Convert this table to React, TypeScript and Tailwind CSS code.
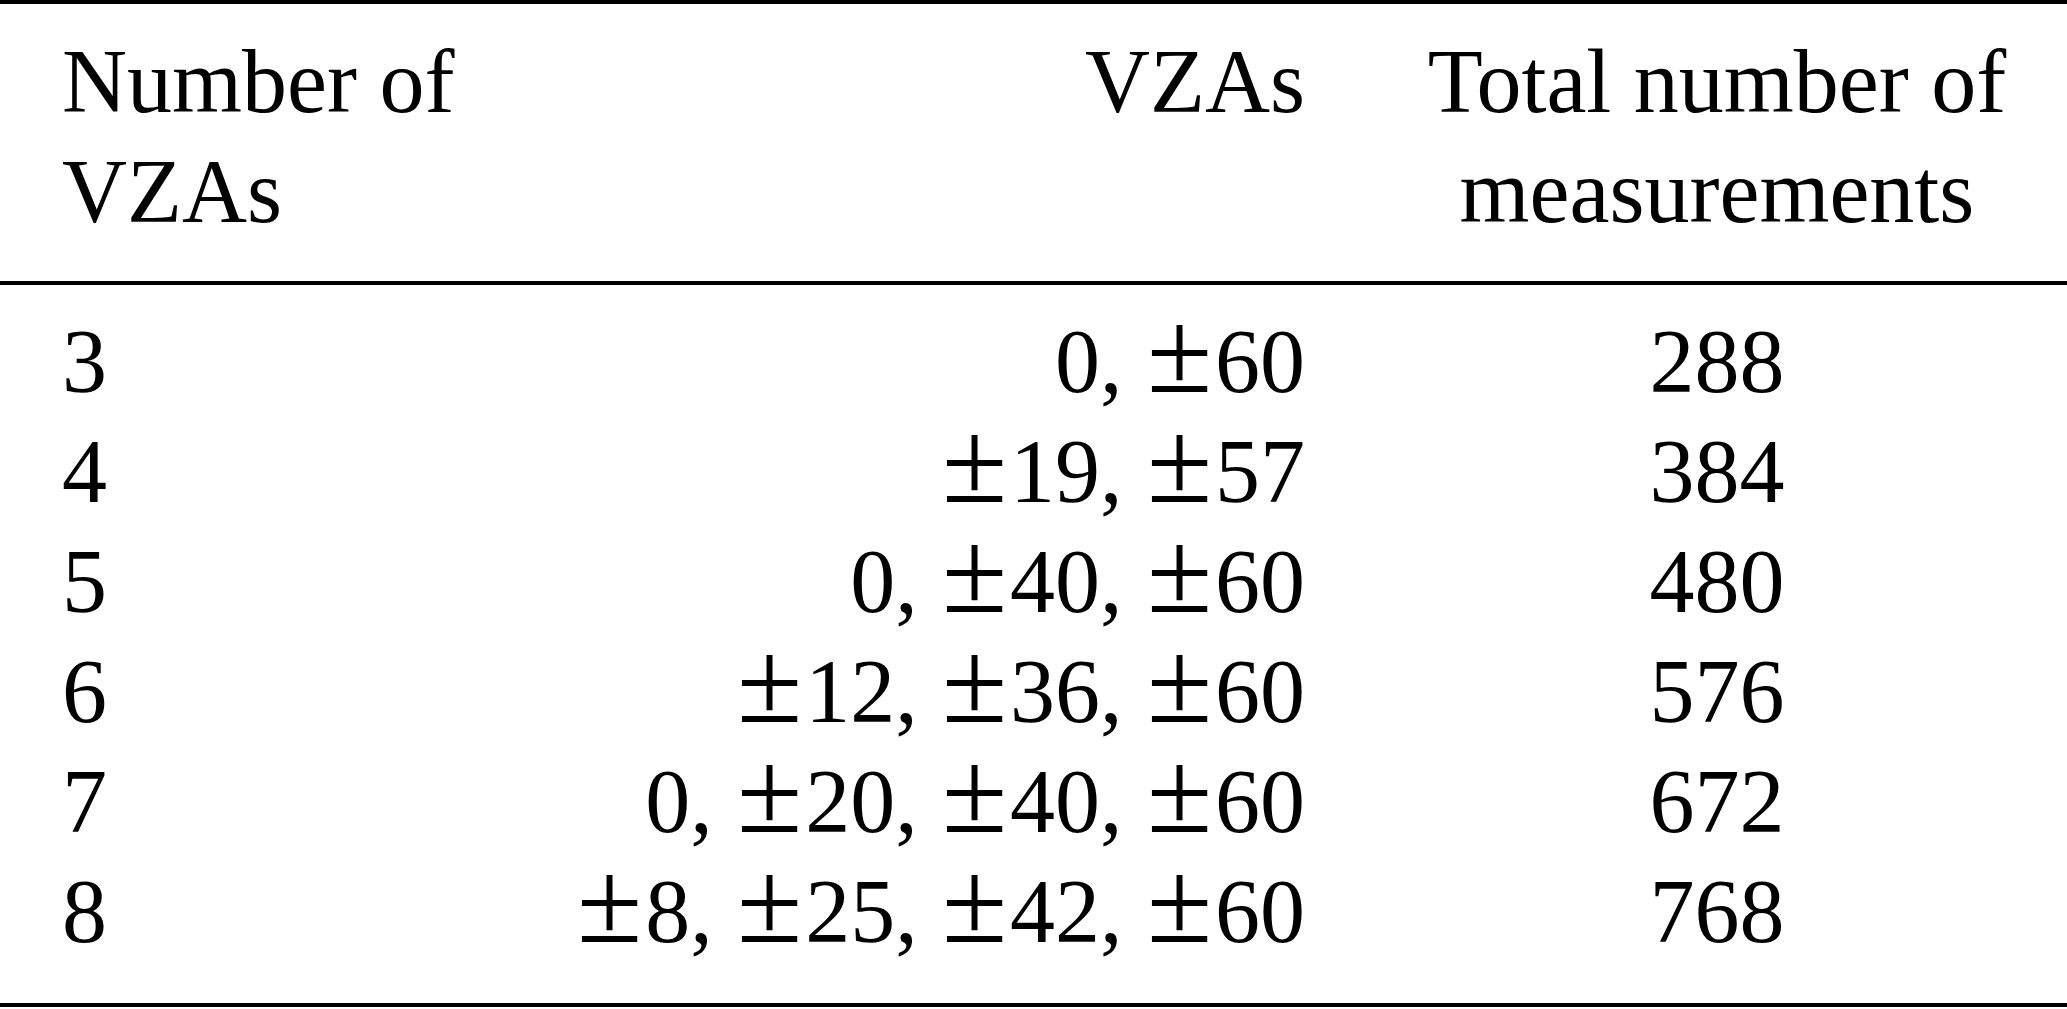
import React from "react";

const rows: [string, string, string][] = [
  ["3", "0, ±60", "288"],
  ["4", "±19, ±57", "384"],
  ["5", "0, ±40, ±60", "480"],
  ["6", "±12, ±36, ±60", "576"],
  ["7", "0, ±20, ±40, ±60", "672"],
  ["8", "±8, ±25, ±42, ±60", "768"],
];

function Vza({ text }: { text: string }) {
  const items = text.split(", ");
  return (
    <>
      {items.map((it, idx) => {
        const pm = it.startsWith("±");
        const num = pm ? it.slice(1) : it;
        return (
          <React.Fragment key={idx}>
            {idx > 0 && ","}
            {pm ? (
              <span
                className={
                  idx > 0
                    ? "inline-block leading-[63px] scale-[1.32] origin-[50%_62px] ml-[32px] mr-[11px]"
                    : "inline-block leading-[63px] scale-[1.32] origin-[50%_62px] ml-[10px] mr-[11px]"
                }
              >
                ±
              </span>
            ) : (
              idx > 0 && " "
            )}
            {num}
          </React.Fragment>
        );
      })}
    </>
  );
}

export default function App() {
  return (
    <div
      className="w-[2067px] h-[1009px] bg-white text-black overflow-hidden"
      style={{ fontFamily: '"Liberation Serif", "Times New Roman", serif' }}
    >
      <div className="h-[4px] bg-black" />
      <div className="grid grid-cols-[562px_743px_762px] text-[90px] leading-[110px] pt-[23px] pb-[34px]">
        <div className="pl-[62px]">
          Number of
          <br />
          VZAs
        </div>
        <div className="text-right">VZAs</div>
        <div className="pl-[62px] text-center">
          Total number of
          <br />
          measurements
        </div>
      </div>
      <div className="h-[4px] bg-black" />
      <div className="flex flex-col text-[90px] leading-[110px] pt-[22px] pb-[36px]">
        {rows.map((r) => (
          <div key={r[0]} className="grid grid-cols-[562px_743px_762px]">
            <div className="pl-[62px]">{r[0]}</div>
            <div className="text-right whitespace-nowrap">
              <Vza text={r[1]} />
            </div>
            <div className="pl-[62px] text-center">{r[2]}</div>
          </div>
        ))}
      </div>
      <div className="h-[4px] bg-black" />
    </div>
  );
}
